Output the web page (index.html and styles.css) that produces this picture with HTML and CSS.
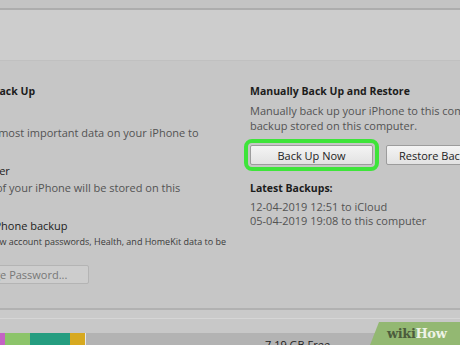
FILE: index.html
```html
<!DOCTYPE html>
<html lang="en">
<head>
    <meta charset="UTF-8">
    <title>Backups</title>
    <link rel="stylesheet" href="styles.css">
</head>
<body>
    <div class="screen">
        <div class="top-strip"></div>
        <div class="top-panel"></div>

        <div class="backups">
            <div class="col col-auto">
                <h2 class="heading">Automatically Back Up</h2>
                <div class="option opt-icloud">
                    <div class="opt-label">iCloud</div>
                    <p class="desc">Back up the most important data on your iPhone to<br>iCloud.</p>
                </div>
                <div class="option opt-pc">
                    <div class="opt-label">This computer</div>
                    <p class="desc">A full backup of your iPhone will be stored on this<br>computer.</p>
                </div>
                <div class="option opt-encrypt">
                    <div class="opt-label">Encrypt iPhone backup</div>
                    <p class="small">This will allow account passwords, Health, and HomeKit data to be<br>backed up.</p>
                </div>
                <button class="btn btn-pass">Change Password...</button>
            </div>

            <div class="col col-manual">
                <h2 class="heading">Manually Back Up and Restore</h2>
                <p class="desc">Manually back up your iPhone to this computer or restore a<br>backup stored on this computer.</p>
                <div class="btn-row">
                    <button class="btn btn-now">Back Up Now</button>
                    <button class="btn btn-restore">Restore Backup...</button>
                </div>
                <h2 class="heading latest">Latest Backups:</h2>
                <p class="dates">12-04-2019 12:51 to iCloud<br>05-04-2019 19:08 to this computer</p>
            </div>
        </div>

        <div class="divider"></div>

        <div class="storage">
            <div class="seg seg-pink"></div>
            <div class="seg seg-green"></div>
            <div class="seg seg-teal"></div>
            <div class="seg seg-yellow"></div>
            <div class="seg seg-free">7.19 GB Free</div>
        </div>

        <div class="wikihow"><span class="wiki">wiki</span><span class="how">How</span></div>
    </div>
</body>
</html>
```

FILE: styles.css
```css
* {
    margin: 0;
    padding: 0;
    box-sizing: border-box;
}

body {
    font-family: 'Open Sans', 'Noto Sans', sans-serif;
    background: #c6c6c6;
    color: #555;
    overflow: hidden;
}

.screen {
    position: relative;
    width: 460px;
    height: 345px;
    overflow: hidden;
    background: #c6c6c6;
}

.top-strip {
    height: 10px;
    background: #c4c4c4;
    border-bottom: 2px solid #adadad;
}

.top-panel {
    height: 51px;
    background: #cdcdcd;
    border-bottom: 1px solid #c0c0c0;
}

.backups {
    display: flex;
    height: 247px;
    padding-top: 22px;
}

.col {
    flex: none;
}

.col-auto {
    width: 250px;
    margin-left: -84px;
}

.col-manual {
    width: 260px;
    margin-left: 84px;
}

.heading {
    font-size: 10.5px;
    font-weight: 700;
    color: #1c1c1c;
    line-height: 16px;
    margin-bottom: 4px;
    white-space: nowrap;
}

.desc {
    font-size: 11px;
    line-height: 15px;
    color: #535353;
    white-space: nowrap;
}

.opt-label {
    font-size: 11px;
    line-height: 16px;
    color: #1c1c1c;
    white-space: nowrap;
}

.opt-icloud {
    margin: 10px 0 0 19px;
}

.opt-pc {
    margin: 8px 0 0 11px;
}

.opt-pc .opt-label {
    padding-left: 9px;
}

.opt-pc .desc {
    margin-top: 1px;
}

.opt-encrypt {
    margin: 8px 0 0 34px;
}

.small {
    font-size: 9px;
    line-height: 13px;
    color: #3a3a3a;
    white-space: nowrap;
    margin: 1px 0 0 -1px;
}

.btn {
    font-family: inherit;
    font-size: 11px;
    color: #1c1c1c;
    background: linear-gradient(#f4f4f4, #e2e2e2);
    border: 1px solid #9c9c9c;
    border-radius: 2px;
    height: 20px;
    white-space: nowrap;
}

.btn-pass {
    display: block;
    margin: 4px 0 0 30px;
    width: 143px;
    height: 19px;
    color: #777;
    background: #cdcdcd;
    border-color: #b4b4b4;
}

.btn-row {
    display: flex;
    gap: 13px;
    margin: 12px 0 15px;
}

.btn-now {
    width: 123px;
    outline: 4px solid #3ee43a;
    outline-offset: 2px;
}

.btn-restore {
    width: 110px;
    text-align: left;
    padding-left: 12px;
}

.latest {
    margin-bottom: 4px;
}

.dates {
    font-size: 11px;
    line-height: 14px;
    color: #535353;
    white-space: nowrap;
}

.divider {
    height: 25px;
    border-top: 2px solid #b1b1b1;
    background: linear-gradient(#cacaca 0 8px, #d6d6d6 8px 9px, #c8c8c8 9px);
}

.storage {
    display: flex;
    height: 12px;
}

.seg-pink { width: 5px; background: #c463c4; }
.seg-green { width: 25px; background: #8cc46a; }
.seg-teal { width: 40px; background: #259d80; }
.seg-yellow { width: 16px; background: #d7a920; border-right: 1px solid #e8e8e8; }

.seg-free {
    flex: 1;
    background: #b3b3b3;
    font-size: 11px;
    color: #1c1c1c;
    padding-left: 179px;
    line-height: 24px;
}

.wikihow {
    position: absolute;
    right: 0;
    bottom: 0;
    width: 90px;
    height: 23px;
    background: #93b872;
    clip-path: polygon(9px 0, 100% 0, 100% 100%, 0 100%);
    font-family: 'DejaVu Serif', serif;
    font-weight: 700;
    font-size: 13px;
    line-height: 23px;
    padding-left: 17px;
    letter-spacing: -0.4px;
}

.wiki { color: #4c5c3c; }
.how { color: #eef3e6; }
```
